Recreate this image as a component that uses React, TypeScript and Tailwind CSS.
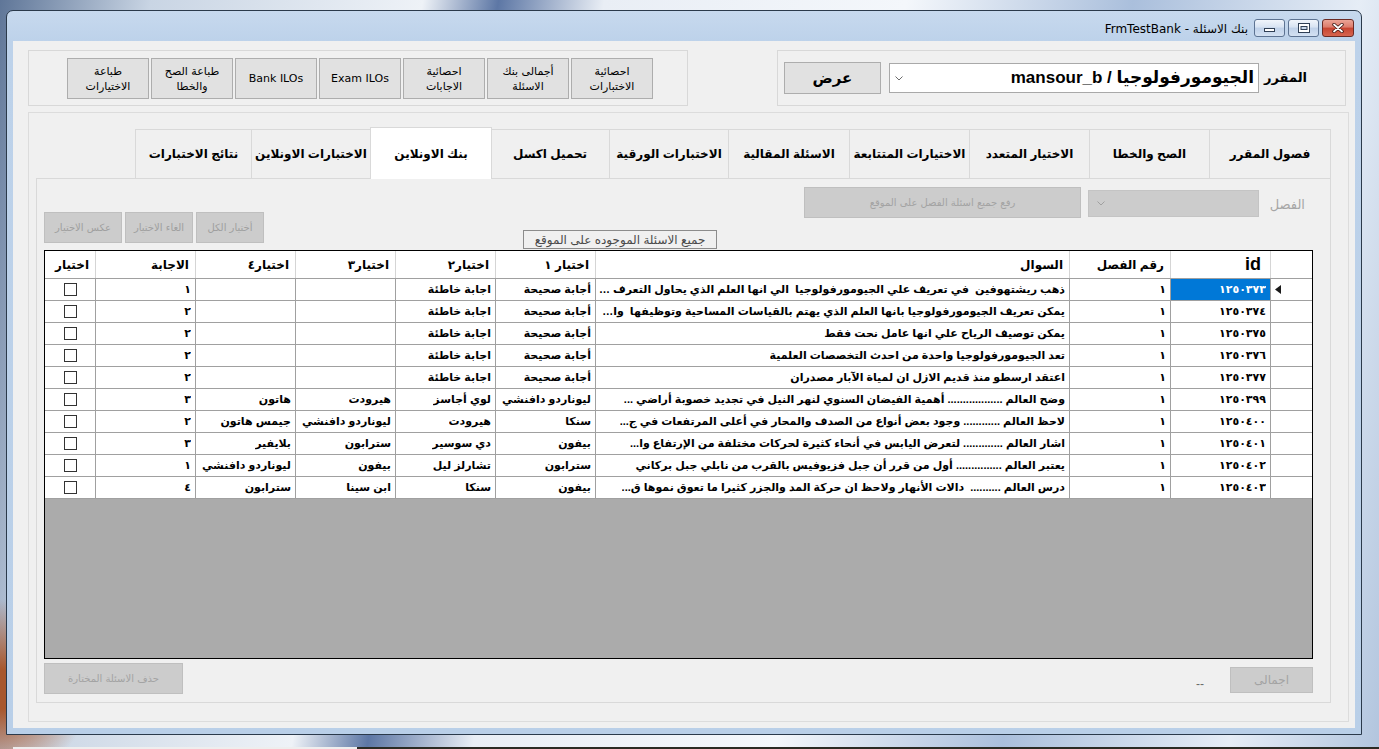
import React from 'react';

type Row = { id: string; q: string; o1: string; o2: string; o3: string; o4: string; a: string };

const rows: Row[] = [
  { id: '١٢٥٠٣٧٣', q: 'ذهب ريشتهوفين  في تعريف علي الجيومورفولوجيا  الي انها العلم الذي يحاول التعرف ع...', o1: 'أجابة صحيحة', o2: 'اجابة خاطئة', o3: '', o4: '', a: '١' },
  { id: '١٢٥٠٣٧٤', q: 'يمكن تعريف الجيومورفولوجيا بانها العلم الذي يهتم بالقياسات المساحية وتوظيفها  واخرا...', o1: 'أجابة صحيحة', o2: 'اجابة خاطئة', o3: '', o4: '', a: '٢' },
  { id: '١٢٥٠٣٧٥', q: 'يمكن توصيف الرياح علي انها عامل نحت فقط', o1: 'أجابة صحيحة', o2: 'اجابة خاطئة', o3: '', o4: '', a: '٢' },
  { id: '١٢٥٠٣٧٦', q: 'تعد الجيومورفولوجيا واحدة من احدث التخصصات العلمية', o1: 'أجابة صحيحة', o2: 'اجابة خاطئة', o3: '', o4: '', a: '٢' },
  { id: '١٢٥٠٣٧٧', q: 'اعتقد ارسطو منذ قديم الازل ان لمياة الآبار مصدران', o1: 'أجابة صحيحة', o2: 'اجابة خاطئة', o3: '', o4: '', a: '٢' },
  { id: '١٢٥٠٣٩٩', q: 'وضح العالم .................. أهمية الفيضان السنوي لنهر النيل في تجديد خصوبة أراضي ...', o1: 'ليوناردو دافنشي', o2: 'لوي أجاسز', o3: 'هيرودت', o4: 'هاتون', a: '٣' },
  { id: '١٢٥٠٤٠٠', q: 'لاحظ العالم ............ وجود بعض أنواع من الصدف والمحار في أعلى المرتفعات في ج...', o1: 'سنكا', o2: 'هيرودت', o3: 'ليوناردو دافنشي', o4: 'جيمس هاتون', a: '٢' },
  { id: '١٢٥٠٤٠١', q: 'اشار العالم ............. لتعرض اليابس في أنحاء كثيرة لحركات مختلفة من الإرتفاع وا...', o1: 'بيفون', o2: 'دي سوسير', o3: 'سترابون', o4: 'بلايفير', a: '٣' },
  { id: '١٢٥٠٤٠٢', q: 'يعتبر العالم ............... أول من قرر أن جبل فزيوفيس بالقرب من نابلي جبل بركاني', o1: 'سترابون', o2: 'تشارلز ليل', o3: 'بيفون', o4: 'ليوناردو دافنشي', a: '١' },
  { id: '١٢٥٠٤٠٣', q: 'درس العالم ..........  دالات الأنهار ولاحظ ان حركة المد والجزر كثيرا ما تعوق نموها ق...', o1: 'بيفون', o2: 'سنكا', o3: 'ابن سينا', o4: 'سترابون', a: '٤' },
];

// columns left -> right (the form is right-to-left)
const colW = ['w-[51px]', 'w-[100px]', 'w-[100px]', 'w-[100px]', 'w-[100px]', 'w-[100px]', 'w-[474px]', 'w-[101px]', 'w-[100px]', 'w-[41px]'];
const headers = ['اختيار', 'الاجابة', 'اختيار٤', 'اختيار٣', 'اختيار٢', 'اختيار ١', 'السوال', 'رقم الفصل', 'id', ''];

const topButtons = ['طباعة\nالاختيارات', 'طباعة الصح\nوالخطا', 'Bank ILOs', 'Exam ILOs', 'احصائية\nالاجابات', 'أجمالى بنك\nالاسئلة', 'احصائية\nالاختبارات'];

const tabs = [
  { label: 'نتائج الاختبارات', w: 'w-[117px]' },
  { label: 'الاختبارات الاونلاين', w: 'w-[119px]' },
  { label: 'بنك الاونلاين', w: 'w-[122px]', active: true },
  { label: 'تحميل اكسل', w: 'w-[119px]' },
  { label: 'الاختبارات الورقية', w: 'w-[119px]' },
  { label: 'الاسئلة المقالية', w: 'w-[121px]' },
  { label: 'الاختيارات المتتابعة', w: 'w-[120px]' },
  { label: 'الاختيار المتعدد', w: 'w-[120px]' },
  { label: 'الصح والخطا', w: 'w-[120px]' },
  { label: 'فصول المقرر', w: 'w-[121px]' },
];

const Chevron = ({ color }: { color: string }) => (
  <svg width="8" height="5" viewBox="0 0 8 5">
    <polyline points="0.5,0.5 4,4 7.5,0.5" fill="none" stroke={color} strokeWidth="1" />
  </svg>
);

const Cell = ({ w, children, sel }: { w: string; children?: React.ReactNode; sel?: boolean }) => (
  <div
    className={`${w} shrink-0 flex items-center justify-end pr-[4px] overflow-hidden border-r border-[#a0a0a0] ${sel ? 'bg-[#0078d7] text-white' : ''}`}
  >
    <span dir="rtl" className="min-w-0 overflow-hidden text-ellipsis whitespace-pre">
      {children}
    </span>
  </div>
);

export default function App() {
  return (
    <div className="w-[1379px] h-[749px] overflow-hidden flex flex-col bg-[radial-gradient(circle_at_0%_92%,#a8582e_0,#a8582e_20px,transparent_90px),linear-gradient(100deg,#5f7698_0%,#c9d5e4_10%,#eef2f7_28%,#5d77a5_33%,#e9eef5_40%,#f4f7fb_60%,#aabfdc_75%,#e6edf6_90%,#b2c5de_100%)] font-['Liberation_Sans','DejaVu_Sans',sans-serif] text-black">
      {/* window */}
      <div className="ml-[6px] mt-[10px] w-[1356px] h-[725px] shrink-0 rounded-t-[7px] border border-[#2b3a4b] bg-[linear-gradient(180deg,#c7d9ee_0%,#bdd2ea_30px,#b9cfe8_100%)] flex flex-col">
        {/* title bar */}
        <div className="h-[30px] shrink-0 flex items-start justify-end pr-[7px]">
          <span dir="rtl" className="mt-[9px] mr-[6px] text-[12px] font-['DejaVu_Sans',sans-serif] text-black">
            بنك الاسئلة - FrmTestBank
          </span>
          <div className="mt-[8px] flex gap-[3px]">
            <div className="w-[31px] h-[18px] rounded-[3px] border border-[#5d7392] bg-[linear-gradient(180deg,#f0f5fb_0%,#d7e3f2_45%,#bfd1e9_50%,#d3e1f2_100%)] flex items-end justify-center pb-[4px]">
              <div className="w-[11px] h-[4px] bg-white border border-[#2f3f55]" />
            </div>
            <div className="w-[31px] h-[18px] rounded-[3px] border border-[#5d7392] bg-[linear-gradient(180deg,#f0f5fb_0%,#d7e3f2_45%,#bfd1e9_50%,#d3e1f2_100%)] flex items-center justify-center">
              <svg width="12" height="10" viewBox="0 0 12 10">
                <rect x="0" y="0" width="12" height="10" fill="#2f3f55" />
                <rect x="1" y="1" width="10" height="8" fill="#ffffff" />
                <rect x="3" y="3.5" width="6" height="3" fill="#c9d8ec" stroke="#2f3f55" strokeWidth="1" />
              </svg>
            </div>
            <div className="w-[32px] h-[18px] rounded-[3px] border border-[#6b2a24] bg-[linear-gradient(180deg,#eba496_0%,#dc7b6b_45%,#c74431_50%,#d6654f_100%)] flex items-center justify-center">
              <svg width="12" height="10" viewBox="0 0 12 10">
                <path d="M2 1.5 L10 8.5 M10 1.5 L2 8.5" stroke="#3a1410" strokeWidth="3.4" strokeLinecap="round" />
                <path d="M2 1.5 L10 8.5 M10 1.5 L2 8.5" stroke="#ffffff" strokeWidth="1.8" strokeLinecap="round" />
              </svg>
            </div>
          </div>
        </div>

        {/* client area */}
        <div className="ml-[6px] w-[1342px] h-[687px] shrink-0 bg-[#f0f0f0] flex flex-col">
          {/* top group boxes */}
          <div className="mt-[9px] h-[56px] shrink-0 flex">
            <div className="ml-[15px] w-[660px] h-[56px] border border-[#d8d8d8] pl-[38px] pt-[7px] flex gap-[2px]">
              {topButtons.map((b) => (
                <div
                  key={b}
                  dir="rtl"
                  className="w-[82px] h-[41px] shrink-0 bg-[#e1e1e1] border border-[#adadad] flex items-center justify-center text-center whitespace-pre-line text-[11px] leading-[15px] font-['DejaVu_Sans',sans-serif]"
                >
                  {b}
                </div>
              ))}
            </div>
            <div className="ml-[89px] w-[569px] h-[56px] border border-[#d8d8d8] pl-[6px] flex items-center">
              <div className="w-[97px] h-[32px] shrink-0 bg-[#e1e1e1] border border-[#adadad] flex items-center justify-center text-[15px] font-bold">
                <span dir="rtl">عرض</span>
              </div>
              <div className="ml-[8px] w-[370px] h-[30px] shrink-0 bg-white border border-[#a9a9a9] flex items-center justify-between pl-[5px] pr-[4px]">
                <Chevron color="#6b6b6b" />
                <span dir="rtl" className="text-[17px] font-bold whitespace-nowrap">الجيومورفولوجيا / mansour_b</span>
              </div>
              <div className="ml-[10px] w-[38px] shrink-0 flex justify-end text-[13px] font-bold">
                <span dir="rtl" className="whitespace-nowrap">المقرر</span>
              </div>
            </div>
          </div>

          {/* outer box with tab control */}
          <div className="mt-[6px] ml-[15px] w-[1321px] h-[610px] shrink-0 border border-[#dcdcdc] pl-[7px] pt-[14px]">
            <div className="w-[1295px] flex flex-col">
              {/* tab headers */}
              <div className="h-[51px] flex items-end justify-end">
                {tabs.map((t) =>
                  t.active ? (
                    <div
                      key={t.label}
                      className={`${t.w} h-[52px] -mb-[1px] -mx-[1px] relative z-10 bg-white border border-b-0 border-[#d9d9d9] flex items-center justify-center text-[12px] font-bold`}
                    >
                      <span dir="rtl">{t.label}</span>
                    </div>
                  ) : (
                    <div
                      key={t.label}
                      className={`${t.w} h-[49px] bg-[#f0f0f0] border border-b-0 border-l-0 first:border-l border-[#d9d9d9] flex items-center justify-center text-[12px] font-bold`}
                    >
                      <span dir="rtl" className="whitespace-nowrap">{t.label}</span>
                    </div>
                  )
                )}
              </div>

              {/* tab page */}
              <div className="h-[525px] border border-[#d9d9d9] bg-[#f0f0f0] flex flex-col">
                {/* controls above grid */}
                <div className="h-[71px] shrink-0 flex items-start">
                  <div className="ml-[7px] mt-[33px] flex gap-[3px]">
                    {['عكس الاختيار', 'الغاء الاختيار', 'أختيار الكل'].map((b, i) => (
                      <div
                        key={b}
                        className={`${i === 0 ? 'w-[78px]' : 'w-[68px]'} h-[31px] bg-[#cccccc] border border-[#bfbfbf] flex items-center justify-center text-[10px] text-[#9f9f9f] font-['DejaVu_Sans',sans-serif]`}
                      >
                        <span dir="rtl" className="whitespace-nowrap">{b}</span>
                      </div>
                    ))}
                  </div>
                  <div className="ml-[259px] mt-[51px] w-[194px] h-[19px] border border-[#8c8c8c] flex items-center justify-center text-[12px] text-[#4a4a4a]">
                    <span dir="rtl" className="whitespace-nowrap">جميع الاسئلة الموجوده على الموقع</span>
                  </div>
                  <div className="ml-[87px] mt-[8px] w-[277px] h-[31px] bg-[#cccccc] border border-[#bfbfbf] flex items-center justify-center text-[10px] text-[#a3a3a3] font-['DejaVu_Sans',sans-serif]">
                    <span dir="rtl">رفع جميع اسئلة الفصل على الموقع</span>
                  </div>
                  <div className="ml-[7px] mt-[11px] w-[171px] h-[27px] bg-[#cccccc] border border-[#c4c4c4] flex items-center pl-[8px]">
                    <Chevron color="#a0a0a0" />
                  </div>
                  <div className="ml-[10px] mt-[16px] w-[36px] flex justify-end text-[13px] text-[#a6a6a6]">
                    <span dir="rtl">الفصل</span>
                  </div>
                </div>

                {/* data grid */}
                <div className="ml-[7px] w-[1269px] h-[409px] shrink-0 border border-black bg-[#ababab] flex flex-col text-[11px] font-bold">
                  <div className="h-[28px] shrink-0 flex bg-white border-b border-[#a0a0a0] text-[12px]">
                    {headers.map((h, i) => (
                      <div
                        key={i}
                        className={`${colW[i]} shrink-0 flex items-center justify-end pr-[6px] ${i === 9 ? '' : 'border-r border-[#d5d5d5]'} ${i === 8 ? 'text-[18px] pr-[9px]' : ''}`}
                      >
                        <span dir="rtl" className="whitespace-nowrap">{h}</span>
                      </div>
                    ))}
                  </div>
                  {rows.map((r, idx) => (
                    <div key={r.id} className="h-[22px] shrink-0 flex bg-white border-b border-[#a0a0a0]">
                      <div className={`${colW[0]} shrink-0 flex items-center justify-center border-r border-[#a0a0a0]`}>
                        <div className="w-[13px] h-[13px] border border-[#333333] bg-white" />
                      </div>
                      <Cell w={colW[1]}>{r.a}</Cell>
                      <Cell w={colW[2]}>{r.o4}</Cell>
                      <Cell w={colW[3]}>{r.o3}</Cell>
                      <Cell w={colW[4]}>{r.o2}</Cell>
                      <Cell w={colW[5]}>{r.o1}</Cell>
                      <Cell w={colW[6]}>{r.q}</Cell>
                      <Cell w={colW[7]}>{'١'}</Cell>
                      <Cell w={colW[8]} sel={idx === 0}>
                        {r.id}
                      </Cell>
                      <div className={`${colW[9]} shrink-0 flex items-center pl-[4px]`}>
                        {idx === 0 && (
                          <svg width="6" height="9" viewBox="0 0 6 9">
                            <polygon points="6,0 0,4.5 6,9" fill="#1a1a1a" />
                          </svg>
                        )}
                      </div>
                    </div>
                  ))}
                </div>

                {/* bottom controls */}
                <div className="mt-[4px] flex items-start">
                  <div className="ml-[7px] w-[139px] h-[31px] bg-[#cccccc] border border-[#bfbfbf] flex items-center justify-center text-[10px] text-[#a3a3a3] font-['DejaVu_Sans',sans-serif]">
                    <span dir="rtl">حذف الاسئلة المختارة</span>
                  </div>
                  <div className="ml-auto mt-[12px] text-[12px] text-[#6a6a6a]">--</div>
                  <div className="ml-[26px] mr-[17px] mt-[4px] w-[83px] h-[26px] bg-[#cccccc] border border-[#bfbfbf] flex items-center justify-center text-[12px] text-[#a3a3a3]">
                    <span dir="rtl">اجمالى</span>
                  </div>
                </div>
              </div>
            </div>
          </div>
        </div>
      </div>

      {/* desktop strip under the window */}
      <div className="h-[12px] shrink-0" />
      <div className="h-[2px] shrink-0 flex">
        <div className="ml-[13px] w-[344px] bg-[#eeeeee]" />
        <div className="flex-1 bg-[#2b2b24]" />
      </div>
    </div>
  );
}
